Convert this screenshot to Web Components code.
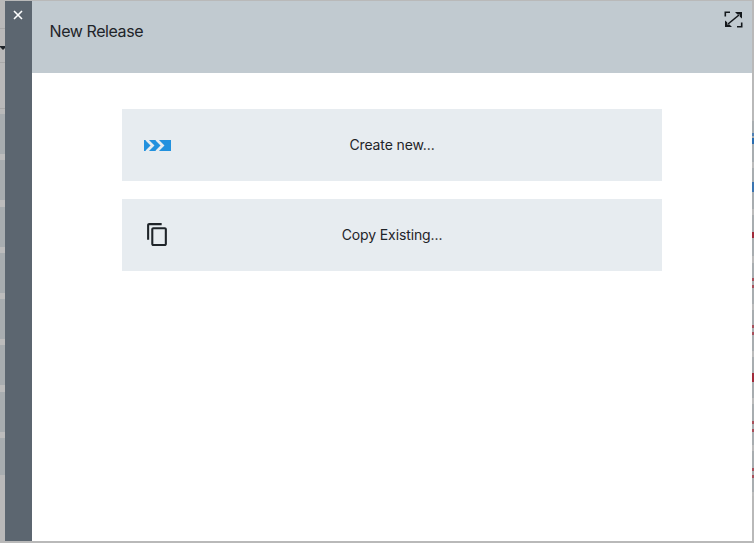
<!DOCTYPE html>
<html>
<head>
<meta charset="utf-8">
<title>New Release</title>
<style>
  html, body { margin: 0; height: 100%; }
  body { font-family: Inter, "Liberation Sans", sans-serif; }
</style>
</head>
<body>
<page-backdrop>
  <release-drawer heading="New Release">
    <choice-button label="Create new...">
      <svg slot="icon" width="27" height="11" viewBox="0 0 27 11">
        <path fill="#2291de" d="M0 0h27v11H0z"/>
        <path fill="none" stroke="#e7ecf0" stroke-width="2.800" d="M2.500 -.5 8.500 5.500 2.500 11.500M12.500 -.5 18.500 5.500 12.500 11.500"/>
      </svg>
    </choice-button>
    <choice-button label="Copy Existing...">
      <svg class="copy" slot="icon" width="25" height="25" viewBox="0 0 24 24" style="margin:-2px 0 0 1px">
        <path fill="#1f2429" d="M16 1H4c-1.100 0-2 .9-2 2v14h2V3h12V1zm3 4H8c-1.100 0-2 .9-2 2v14c0 1.100.9 2 2 2h11c1.100 0 2-.9 2-2V7c0-1.100-.9-2-2-2zm0 16H8V7h11v14z"/>
      </svg>
    </choice-button>
  </release-drawer>
</page-backdrop>

<script>
class PageBackdrop extends HTMLElement {
  constructor() {
    super();
    const marks = [
      [133, 3, "#4f80b4"], [138, 6, "#2a6db0"], [182, 10, "#3a74b0"],
      [232, 6, "#a02a3a"], [278, 3, "#a8505c"], [285, 3, "#a8505c"],
      [325, 3, "#a8505c"], [332, 3, "#a8505c"], [373, 9, "#a02a3a"],
      [421, 3, "#a8505c"], [429, 3, "#a8505c"], [468, 3, "#a8505c"], [475, 3, "#a8505c"],
    ].map(([top, h, c]) => `<div class="mark" style="top:${top}px;height:${h}px;background:${c}"></div>`).join("");

    this.attachShadow({ mode: "open" }).innerHTML = `
      <style>
        :host {
          display: block;
          position: relative;
          box-sizing: border-box;
          width: 754px;
          height: 543px;
          overflow: hidden;
          padding: 1px 2px 2px 5px;
          background: #b9b9b9;
        }
        .rows { position: absolute; width: 5px; }
        .rows.left {
          left: 0;
          top: 114px;
          height: 361px;
          background: repeating-linear-gradient(#a8adb0 0 40px, #bcbcbc 40px 46.300px);
        }
        .rows.right {
          left: 752px;
          top: 121px;
          height: 375px;
          background: repeating-linear-gradient(#a8adb0 0 41px, #bcbcbc 41px 47.200px);
        }
        .line { position: absolute; left: 0; width: 5px; height: 1px; background: #a9a9a9; }
        .caret {
          position: absolute;
          left: -1px;
          top: 46px;
          border: 4px solid transparent;
          border-top-color: #1f2429;
          border-bottom: 0;
        }
        .mark { position: absolute; left: 752px; width: 2px; }
        .content { position: relative; height: 100%; }
      </style>
      <div class="line" style="top:28px"></div>
      <div class="line" style="top:62px"></div>
      <div class="line" style="top:108px"></div>
      <div class="rows left"></div>
      <div class="rows right"></div>
      <div class="caret"></div>
      ${marks}
      <div class="content"><slot></slot></div>
    `;
  }
}

class ReleaseDrawer extends HTMLElement {
  constructor() {
    super();
    this.attachShadow({ mode: "open" });
  }

  connectedCallback() {
    const heading = this.getAttribute("heading") || "";
    this.shadowRoot.innerHTML = `
      <style>
        :host { display: flex; height: 100%; background: #fff; }
        .rail {
          flex: 0 0 27px;
          background: #5c6670;
          display: flex;
          justify-content: center;
          padding: 9px 1px 0 0;
          box-sizing: border-box;
        }
        .rail svg { display: block; }
        .main { flex: 1; display: flex; flex-direction: column; min-width: 0; }
        header {
          height: 72px;
          background: #c1cad0;
          display: flex;
          align-items: center;
          justify-content: space-between;
          padding: 0 0 12px 17.500px;
          box-sizing: border-box;
          font-size: 16px;
          letter-spacing: -.42px;
          color: #1f2429;
        }
        header svg { align-self: flex-start; margin: 10px 9px 0 0; }
        .choices {
          display: flex;
          flex-direction: column;
          gap: 18px;
          padding: 36px 90px;
        }
      </style>
      <div class="rail">
        <svg width="10" height="10" viewBox="0 0 10 10">
          <path d="M1 1l8 8M9 1l-8 8" stroke="#fff" stroke-width="1.600" fill="none"/>
        </svg>
      </div>
      <div class="main">
        <header>
          <span>${heading}</span>
          <svg width="19" height="17" viewBox="0 0 19 17" fill="none" stroke="#14181c" stroke-width="1.600">
            <path d="M1.300 5.500V1.300H6M17.700 11.500v4.200H13"/>
            <path d="M4 13 15 4"/>
            <path fill="#14181c" stroke="none" d="M11 1h7v6.500l-2.200-1.800V3.500H13.500zM8 16H1V9.500l2.200 1.800v2.200H5.500z"/>
          </svg>
        </header>
        <div class="choices"><slot></slot></div>
      </div>
    `;
  }
}

class ChoiceButton extends HTMLElement {
  constructor() {
    super();
    this.attachShadow({ mode: "open" });
  }

  connectedCallback() {
    this.shadowRoot.innerHTML = `
      <style>
        :host {
          display: grid;
          grid-template-columns: 1fr auto 1fr;
          align-items: center;
          height: 72px;
          padding-left: 22px;
          padding-right: 22px;
          background: #e7ecf0;
          font-size: 14px;
          letter-spacing: -.11px;
          color: #1f2429;
          cursor: pointer;
        }
        .icon { display: flex; align-items: center; }
        span { padding-bottom: 2px; }
        ::slotted(svg) { display: block; }
      </style>
      <div class="icon"><slot name="icon"></slot></div>
      <span>${this.getAttribute("label") || ""}</span>
    `;
  }
}

customElements.define("page-backdrop", PageBackdrop);
customElements.define("release-drawer", ReleaseDrawer);
customElements.define("choice-button", ChoiceButton);
</script>
</body>
</html>
